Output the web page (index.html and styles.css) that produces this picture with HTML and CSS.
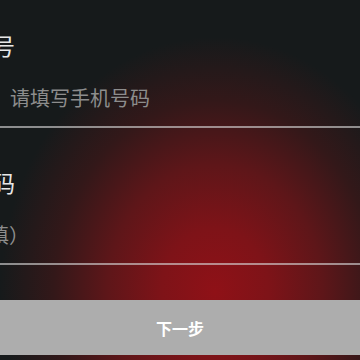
FILE: index.html
```html
<!DOCTYPE html>
<html lang="zh-CN">
<head>
    <meta charset="UTF-8">
    <meta name="viewport" content="width=device-width, initial-scale=1.0">
    <title>注册</title>
    <link rel="stylesheet" href="styles.css">
</head>
<body>
    <div class="form">
        <div class="field">
            <label class="field-label" for="phone">手机号</label>
            <input type="text" id="phone" class="field-input" placeholder="请填写手机号码">
        </div>
        <div class="field">
            <label class="field-label" for="invite">邀请码</label>
            <input type="text" id="invite" class="field-input field-input-shifted" placeholder="邀请码（选填）">
        </div>
        <button class="btn-next">下一步</button>
    </div>
</body>
</html>
```

FILE: styles.css
```css
html, body {
    width: 360px;
    height: 360px;
}
body {
    margin: 0;
    overflow: hidden;
    font-family: "Noto Sans CJK SC", "Noto Sans", sans-serif;
    background-color: #161a1b;
    background-image: radial-gradient(ellipse 215px 255px at 215px 292px,
        #8f1117 0%, #7e1318 25%, #5e1619 50%, #331819 75%, #161a1b 100%);
    color: #e6e6e6;
}
.form {
    display: flex;
    flex-direction: column;
}
.field {
    display: flex;
    flex-direction: column;
    padding-top: 39px;
}
.field:first-child {
    padding-top: 30px;
}
.field-label {
    height: 30px;
    line-height: 30px;
    font-size: 23px;
    text-indent: -54px;
    white-space: nowrap;
    color: #e8e8e8;
}
.field-input {
    margin-top: 14px;
    height: 54px;
    box-sizing: border-box;
    padding: 0 0 6px 10px;
    border: none;
    border-bottom: 2px solid rgba(215, 215, 215, 0.62);
    background: transparent;
    font-family: inherit;
    font-size: 20px;
    color: #e6e6e6;
    outline: none;
}
.field-input::placeholder {
    color: #8d8d8d;
}
.field-input-shifted {
    padding-left: 0;
    text-indent: -111px;
}
.btn-next {
    margin-top: 35px;
    height: 55px;
    border: none;
    background-color: #adadad;
    color: #fff;
    font-family: inherit;
    font-size: 16px;
    font-weight: bold;
    cursor: pointer;
}
```
